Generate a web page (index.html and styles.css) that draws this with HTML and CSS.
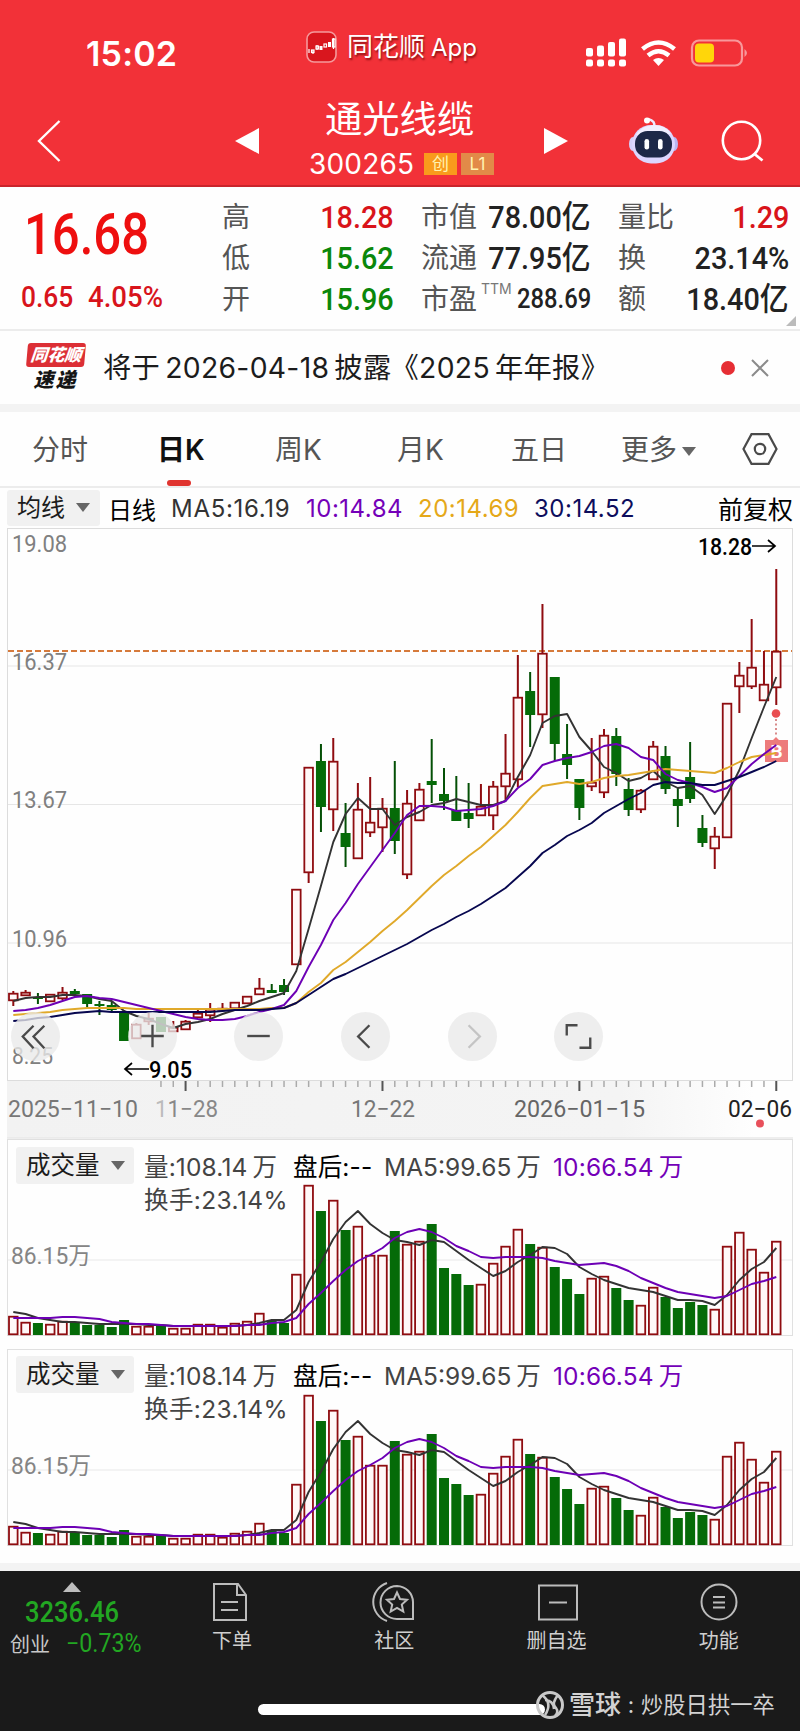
FILE: index.html
```html
<!DOCTYPE html>
<html lang="zh-CN">
<head>
<meta charset="utf-8">
<title>通光线缆 300265</title>
<link rel="stylesheet" href="styles.css">
</head>
<body>
<header class="top">
  <div class="status">
    <span class="clock">15:02</span>
    <span class="app">
      <svg width="31" height="32" viewBox="0 0 31 32"><rect x="1" y="1" width="29" height="30" rx="7" fill="#d9161e" stroke="#f59a9c" stroke-width="1.6"/><g fill="none" stroke="#fff" stroke-width="1.2"><path d="M3 18v4M7 19v4M11 14v5M27.500 7v11"/><rect x="5.500" y="19" width="2.500" height="2.500"/><rect x="10" y="15" width="2.500" height="3"/><rect x="18" y="13" width="2.500" height="3"/><rect x="26.500" y="8" width="2.500" height="8"/></g><path d="M13.500 15h3v4h-3zM22 11h3v5h-3z" fill="#fff"/></svg>
      <span class="app-name">同花顺<i>App</i></span>
    </span>
    <svg class="sys" width="164" height="32" viewBox="584 37 164 32">
      <g fill="#fff"><rect x="585" y="48" width="7" height="8.500" rx="2"/><rect x="596" y="45.500" width="7" height="11" rx="2"/><rect x="607" y="42" width="7" height="14.500" rx="2"/><rect x="618" y="38.500" width="7" height="18" rx="2"/><rect x="585" y="59.500" width="7" height="7" rx="2"/><rect x="596" y="59.500" width="7" height="7" rx="2"/><rect x="607" y="59.500" width="7" height="7" rx="2"/><rect x="618" y="59.500" width="7" height="7" rx="2"/><path d="M652 60q5.500-4 11 0l-5.500 6z"/></g>
      <g fill="none" stroke="#fff" stroke-width="4.600"><path d="M641.500 49q16-13 32 0M647 55.500q10.500-8.500 21 0"/></g>
      <rect x="691" y="40.500" width="50" height="25" rx="7" fill="none" stroke="#f8989b" stroke-width="2.200"/><rect x="694" y="43.500" width="19" height="19" rx="4" fill="#ffd60a"/><path d="M743.500 49v8q5-4 0-8z" fill="#f8989b"/>
    </svg>
  </div>
  <div class="nav">
    <svg width="26" height="44" viewBox="36 119 26 44"><path d="M59.500 121L39 141l20.500 20" fill="none" stroke="#fff" stroke-width="2.400"/></svg>
    <svg class="prev" width="24" height="26" viewBox="0 0 24 26"><path d="M24 0v26L0 13z" fill="#fff"/></svg>
    <div class="title"><h1>通光线缆</h1><div class="code"><span>300265</span><b>创</b><b class="l1">L1</b></div></div>
    <svg class="next" width="24" height="26" viewBox="0 0 24 26"><path d="M0 0v26l24-13z" fill="#fff"/></svg>
    <svg class="robot" width="50" height="48" viewBox="630 116 50 48"><path d="M655 126q2-6-6-8" fill="none" stroke="#eee9ff" stroke-width="2.500"/><circle cx="648" cy="119.500" r="3" fill="#fff"/><ellipse cx="634" cy="143" rx="4" ry="7" fill="#d4d0fa"/><ellipse cx="675" cy="143" rx="4" ry="7" fill="#b9b5f2"/><rect x="633" y="124" width="43" height="38.500" rx="19" fill="#dcd6ff"/><path d="M637 134q6-10 18-10t17 9z" fill="#fff" opacity=".6"/><rect x="636" y="130" width="37" height="26.500" rx="12.500" fill="#1d2848"/><rect x="645.500" y="138" width="4.600" height="10.500" rx="2.300" fill="#fff"/><rect x="659" y="138" width="4.600" height="10.500" rx="2.300" fill="#fff"/></svg>
    <svg width="44" height="44" viewBox="720 118 44 44"><circle cx="741.500" cy="139.500" r="18.700" fill="none" stroke="#fff" stroke-width="2.600"/><path d="M754.500 153l8 6.500" stroke="#fff" stroke-width="2.800"/></svg>
  </div>
</header>

<section class="quote">
  <div class="last"><strong class="din">16.68</strong><div class="chg"><span class="din">0.65</span><span class="din">4.05%</span></div></div>
  <div class="stats">
    <span>高</span><em class="din red">18.28</em><span>市值</span><em class="din">78.00<u>亿</u></em><span class="far">量比</span><em class="din red">1.29</em>
    <span>低</span><em class="din green">15.62</em><span>流通</span><em class="din">77.95<u>亿</u></em><span class="far">换</span><em class="din">23.14%</em>
    <span>开</span><em class="din green">15.96</em><span class="pe">市盈<sup>TTM</sup></span><em class="din small">288.69</em><span class="far">额</span><em class="din">18.40<u>亿</u></em>
  </div>
  <i class="corner"></i>
</section>

<section class="notice">
  <div class="express"><b>同花顺</b><span>速递</span></div>
  <p>将于<s></s>2026-04-18<s></s>披露<span class="lq">《</span>2025<s></s>年年报》</p>
  <i class="dot"></i>
  <svg width="18" height="18" viewBox="0 0 18 18"><path d="M1 1l16 16M17 1L1 17" stroke="#8b8b8b" stroke-width="2"/></svg>
</section>

<nav class="tabs">
  <span>分时</span><span class="on">日K</span><span>周K</span><span class="m">月K</span><span>五日</span><span>更多<i class="caret"></i></span>
  <svg width="36" height="32" viewBox="0 0 36 32"><path d="M9.500 1.200h17L34.500 16l-8 14.800h-17L1.500 16z" fill="none" stroke="#4a4a4a" stroke-width="2.200"/><circle cx="18" cy="16" r="5.200" fill="none" stroke="#4a4a4a" stroke-width="2.200"/></svg>
</nav>

<div class="ma">
  <span class="chip">均线<i class="caret"></i></span><span class="blk">日线</span><span class="m5">MA5:16.19</span><span class="purple">10:14.84</span><span class="gold">20:14.69</span><span class="navy">30:14.52</span><span class="blk adj">前复权</span>
</div>

<section class="kline">
  <svg id="k" width="800" height="611" viewBox="0 528 800 611"></svg>
  <div class="tools">
    <button class="first"><svg viewBox="0 0 50 50"><path d="M23 14L12 25l11 12M34 14L23 25l11 12"/></svg></button>
    <button><svg viewBox="0 0 50 50"><path d="M25 13v23M13.500 24.500h23"/></svg></button>
    <button><svg viewBox="0 0 50 50"><path d="M13.500 24.500h23"/></svg></button>
    <button><svg viewBox="0 0 50 50"><path d="M29 13.500L17.500 25 29 36.500"/></svg></button>
    <button class="off"><svg viewBox="0 0 50 50"><path d="M21 13.500L32.500 25 21 36.500"/></svg></button>
    <button><svg viewBox="0 0 50 50"><path d="M13 24V13.500h11M37 26v10.500H26"/></svg></button>
  </div>
</section>

<section class="vol">
  <svg class="bars" width="800" height="197" viewBox="0 1139 800 197"></svg>
  <div class="legend"><span class="chip">成交量<i class="caret"></i></span><span>量:108.14<s></s>万</span><span class="blk">盘后:--</span><span class="v5">MA5:99.65<s></s>万</span><span class="purple">10:66.54<s></s>万</span><span class="turn">换手:23.14%</span></div>
</section>
<section class="vol">
  <svg class="bars" width="800" height="197" viewBox="0 1139 800 197"></svg>
  <div class="legend"><span class="chip">成交量<i class="caret"></i></span><span>量:108.14<s></s>万</span><span class="blk">盘后:--</span><span class="v5">MA5:99.65<s></s>万</span><span class="purple">10:66.54<s></s>万</span><span class="turn">换手:23.14%</span></div>
</section>

<footer class="bottom">
  <div class="row">
    <div class="index"><i class="up"></i><b class="din">3236.46</b><div><span>创业</span><em class="din">−0.73%</em></div></div>
    <div class="item"><svg width="44" height="42" viewBox="0 0 44 42"><path d="M4 3h24l8 11v25H4zM27 3v11h9M11 21h17M11 29h17"/></svg>下单</div>
    <div class="item"><svg width="44" height="42" viewBox="0 0 44 42"><path d="M25 5a16.500 16.500 0 1 0 0 33h16V21A16.500 16.500 0 0 0 25 5zM15 2a20 20 0 0 0 0 38"/><path d="M25 11.500l3 6.500 7 .8-5.200 4.700 1.500 7L25 27l-6.300 3.500 1.500-7L15 18.800l7-.8z"/></svg>社区</div>
    <div class="item"><svg width="44" height="42" viewBox="0 0 44 42"><path d="M4 4.500h38v34H4zM14 21.500h18"/></svg>删自选</div>
    <div class="item"><svg width="44" height="42" viewBox="0 0 44 42"><circle cx="22" cy="21" r="17.500"/><path d="M16 16h12M16 21.500h12M16 26.500h12"/></svg>功能</div>
  </div>
  <div class="home"></div>
  <div class="mark"><svg width="30" height="30" viewBox="0 0 30 30"><g fill="none" stroke="#c9c9c9"><circle cx="15" cy="15" r="12.500" stroke-width="3"/><path d="M7 5q11 8 3 20M23 5q-7 9-2 13 3 4-1 8M10 10q8 0 9 9" stroke-width="2.500"/></g></svg><b>雪球</b><i>:</i><span>炒股日拱一卒</span></div>
</footer>
<script src="chart.js"></script>
</body>
</html>
```

FILE: styles.css
```css
* { box-sizing: border-box; }
body { margin: 0; width: 800px; background: #fefefe; color: #222; font-family: Inter, "Noto Sans CJK SC", sans-serif; }
i, em { font-style: normal; }
u, s { text-decoration: none; }
s { display: inline-block; width: 5px; }
.din { font-family: Roboto, "Noto Sans CJK SC", sans-serif; font-weight: 500; display: inline-block; white-space: nowrap; transform: scaleX(.87); transform-origin: 0 50%; }
.purple { color: #7400b8 !important; }
.gold { color: #e5a818 !important; }
.navy { color: #0d0d5c !important; }
.blk { color: #000 !important; }

/* header */
.top { height: 187px; background: #f23138; border-bottom: 2px solid #c9242c; color: #fff; }
.status { height: 96px; padding: 10px 51px 0 86px; display: flex; align-items: center; }
.clock { font-size: 34px; font-weight: 600; width: 220px; letter-spacing: .2px; margin-top: 0; }
.app { display: flex; align-items: center; gap: 10px; width: 279px; margin-top: -12px; }
.app-name { font-size: 26px; line-height: 32px; text-shadow: 1px 2px 2px rgba(90,0,0,.65); }
.app-name i { font-size: 24px; margin-left: 6px; }
.sys { margin-top: -1px; flex: none; }
.nav { height: 89px; display: flex; align-items: center; padding: 0 36px; }
.nav > svg { flex: none; margin-top: 1px; }
.prev { margin-left: 173px !important; }
.title { width: 287px; }
.title h1 { margin: -10px 0 0; padding-left: 66px; font-size: 37.300px; line-height: 46px; font-weight: 400; }
.code { display: flex; align-items: center; padding-left: 50px; height: 28px; margin: 7px 0 -4px; font-size: 28px; }
.code span { width: 115px; letter-spacing: .2px; }
.code b { width: 33px; height: 22px; line-height: 22px; font-size: 17px; font-weight: 400; text-align: center; background: #f99b1c; color: #fff3b0; }
.code .l1 { margin-left: 4px; background: #e28a48; }
.robot { margin-left: 61px; }
.robot + svg { margin-left: 41px; }

/* quote */
.quote { height: 144px; border-bottom: 2px solid #ececec; display: flex; position: relative; }
.last { width: 222px; color: #ee0f0f; }
.last strong { display: block; font-size: 57px; line-height: 60px; margin: 18px 0 0 24px; transform: scaleX(.86); }
.chg { display: flex; font-size: 29px; line-height: 34px; color: #d8141c; margin: 15px 0 0 21px; }
.chg span { transform: scaleX(.91); }
.chg span:first-child { width: 67px; }
.chg span:last-child { transform: scaleX(.95); }
.stats { display: grid; grid-template-columns: 90px 82px 79px 118px 60px 138px; grid-auto-rows: 41px; padding-top: 10px; align-items: center; }
.stats span { font-size: 28px; line-height: 41px; color: #555; white-space: nowrap; }
.stats span:nth-of-type(3n+2) { margin-left: 27px; }
.stats .far { margin-left: 27px; }
.stats em { font-size: 32px; line-height: 41px; justify-self: end; transform: scaleX(.9); transform-origin: 100% 50%; color: #222; }
.stats u { font-size: 32px; }
.stats .small { font-size: 27px; transform: scaleX(.88); }
.stats .red { color: #d9141a; }
.stats .green { color: #0a870a; }
.pe sup { font-size: 14px; vertical-align: 15px; line-height: 0; margin-left: 4px; color: #777; }
.corner { position: absolute; right: 4px; bottom: 3px; border: 5px solid transparent; border-right-color: #bbb; border-bottom-color: #bbb; }

/* notice */
.notice { height: 81px; border-bottom: 8px solid #f3f3f3; display: flex; align-items: center; padding-left: 25px; }
.express { width: 78px; text-align: center; font-style: italic; padding-right: 17px; }
.express b { display: block; background: #dc2f35; color: #fff; font-size: 17px; line-height: 24px; border-radius: 3px; margin: 0 1px 0 2px; transform: skewX(-5deg); font-weight: 900; }
.express span { display: block; font-size: 20px; line-height: 26px; font-weight: 900; color: #151515; letter-spacing: 2px; }
.notice p { margin: 0; width: 618px; font-size: 28.300px; line-height: 40px; white-space: nowrap; color: #1c1c1c; letter-spacing: .3px; }
.lq { margin-left: -1px; }
.dot { width: 14px; height: 14px; border-radius: 50%; background: #e62e34; margin: 0 16px 0 0; }

/* tabs */
.tabs { height: 76px; border-bottom: 2px solid #ececec; display: grid; grid-template-columns: 127px 116px 123px 113px 110px 121px 36px; padding-left: 32px; align-items: center; font-size: 28px; color: #555; }
.tabs span { line-height: 76px; height: 74px; position: relative; white-space: nowrap; }
.tabs .on { color: #111; font-weight: 600; margin-left: -2px; }
.tabs .m { margin-left: -1px; }
.tabs .on::after { content: ""; position: absolute; left: 10px; bottom: 0; width: 24px; height: 6px; border-radius: 3px; background: #e0342f; }
.tabs svg { margin-top: -1px; }
.caret { display: inline-block; border: 7px solid transparent; border-top: 9px solid #666; border-bottom: 0; vertical-align: 4px; margin-left: 5px; }

/* moving-average legend */
.ma { height: 40px; display: grid; grid-template-columns: 101px 63px 135px 112px 116px 184px 80px; padding-left: 7px; align-items: center; font-size: 24px; color: #333; white-space: nowrap; }
.ma .purple, .ma .gold, .ma .navy { letter-spacing: .5px; }
.ma .m5 { letter-spacing: .7px; }
.chip { background: #f1f1f1; color: #1c1c1c; height: 36px; line-height: 36px; padding-left: 10px; border-radius: 3px; }
.ma .chip { width: 93px; }
.chip .caret { margin-left: 11px; }
.adj { font-size: 25px; }

/* charts */
.kline { height: 611px; position: relative; }
.kline > svg, .bars { display: block; }
.tools { position: absolute; left: 10.500px; top: 484px; display: flex; gap: 57.700px; }
.tools .first { margin-right: 10.500px; }
.tools button { width: 49px; height: 49px; border: 0; padding: 0; border-radius: 50%; background: rgba(233,233,233,.78); }
.tools svg { display: block; width: 49px; height: 49px; fill: none; stroke: #4a4a4a; stroke-width: 2.400; }
.tools .off svg { stroke: #c4c4c4; }
text { font-family: Roboto, "Noto Sans CJK SC", sans-serif; }
.vol { height: 197px; position: relative; margin-bottom: 12.500px; }
.legend { position: absolute; left: 16px; top: 8px; display: grid; grid-template-columns: 128px 149px 91px 169px 150px; grid-template-rows: 36px 30px; align-items: center; font-size: 24.500px; color: #444; white-space: nowrap; letter-spacing: .15px; }
.legend .chip { width: 118px; height: 37px; letter-spacing: 0; }
.legend .v5 { letter-spacing: 0; }
.turn { grid-column: 2; letter-spacing: .4px; }

/* bottom bar */
.bottom { height: 168px; border-top: 8px solid #f3f3f3; background: #1a1a1a; margin-top: 17px; position: relative; color: #cfcfcf; }
.row { display: flex; }
.index { width: 151px; color: #22a722; padding-top: 11px; }
.up { display: block; border: 9px solid transparent; border-bottom: 10px solid #bdbdbd; border-top: 0; width: 0; margin-left: 63px; }
.index b { display: block; font-size: 29px; line-height: 34px; margin: 3px 0 0 25px; transform: scaleX(.88); }
.index div { display: flex; align-items: center; padding-left: 10px; height: 30px; }
.index span { font-size: 20px; color: #c8c8c8; width: 56px; }
.index em { font-size: 25px; font-weight: 400; transform: scaleX(.93); }
.item { width: 162.500px; display: flex; flex-direction: column; align-items: center; font-size: 20px; line-height: 30px; padding-top: 10px; gap: 3px; }
.item svg { fill: none; stroke: #bcbcbc; stroke-width: 2; }
.home { position: absolute; left: 258px; top: 133px; width: 287px; height: 11px; border-radius: 6px; background: #fff; }
.mark { position: absolute; left: 535px; top: 115px; display: flex; align-items: center; font-size: 22.300px; line-height: 38px; color: #d2d2d2; white-space: nowrap; }
.mark b { font-size: 26px; font-weight: 500; margin-left: 4px; }
.mark i { width: 20px; text-align: center; }
```

FILE: chart.js
```js
const X0 = 13.3, STEP = 12.306;
const px = i => X0 + STEP * i;
const RED = '#8f0c10', GREEN = '#056b08';

// Each candle: [direction, high, body top, body bottom, low]
const candles = [
['r',991,993,1001,1006],['r',990,992,996,996],['g',993,997,999,1004],['r',994,994,1002,1002],['r',987,992,999,1000],['g',989,991,994,997],['g',994,994,1004,1007],['g',1001,1004,1006,1015],['g',1001,1005,1010,1013],['g',1013,1013,1041,1041],
['r',1023,1024,1039,1039],['r',1013,1018,1022,1025],['g',1017,1017,1032,1032],['r',1021,1027,1032,1032],['r',1020,1021,1030,1030],['r',1010,1013,1018,1018],['r',1003,1009,1016,1022],['r',1003,1008,1010,1010],['r',1002,1002,1009,1009],['r',996,996,1004,1004],
['r',978,988,995,995],['g',984,990,993,993],['g',979,985,992,995],['r',889,889,965,965],['r',767,767,873,883],['g',744,761,807,832],['r',738,761,810,831],['g',803,833,847,867],['r',783,809,859,859],['r',777,822,833,837],
['r',798,808,828,852],['g',761,808,841,854],['r',790,803,875,879],['r',783,789,821,821],['g',739,781,785,803],['g',768,794,801,810],['g',776,810,821,821],['g',783,813,819,828],['r',784,806,816,816],['r',781,786,816,830],
['r',734,773,787,801],['r',655,697,780,787],['g',672,691,715,747],['r',604,653,715,728],['g',677,677,744,761],['g',724,754,765,779],['g',779,779,808,820],['r',738,782,787,791],['r',729,735,793,798],['g',728,736,774,786],
['g',778,789,810,816],['r',789,790,810,813],['r',741,746,780,780],['g',746,756,789,794],['g',787,799,806,827],['g',742,777,799,803],['g',815,828,843,847],['r',827,836,849,869],['r',703,703,838,838],['r',662,675,687,713],
['r',619,667,687,689],['r',651,684,701,701],['r',569,651,688,705]];

const averages = [
['#333', [1001,998,997,997,995,995,996,999,1001,1011,1016,1019,1024,1028,1024,1022,1019,1014,1010,1006,1001,997,993,971,929,886,842,814,798,809,809,825,817,812,805,803,799,802,805,805,801,777,755,723,716,714,737,751,767,773,781,778,771,782,788,786,795,814,795,770,738,707,677]],
['#e0a92a', [1015,1014,1013,1012,1010,1009,1008,1008,1008,1008,1009,1009,1009,1009,1009,1009,1009,1009,1009,1009,1009,1008,1008,1003,992,983,970,962,952,942,931,921,910,898,886,875,866,856,847,836,825,812,798,786,784,782,784,782,778,776,775,773,771,769,770,771,772,773,768,762,757,755,753]],
['#6d00b5', [1011,1010,1008,1005,1001,997,996,998,999,1002,1005,1008,1011,1014,1017,1019,1020,1020,1019,1016,1012,1009,1005,991,967,945,920,903,884,867,850,833,815,806,806,807,811,810,809,806,801,788,779,765,761,758,756,752,746,744,748,757,760,774,780,783,787,792,788,776,764,754,745]],
['#07074f', [1021,1020,1018,1017,1015,1013,1012,1011,1012,1012,1012,1012,1012,1012,1012,1012,1012,1011,1010,1010,1010,1009,1008,1003,995,987,979,974,968,962,956,950,944,937,930,924,917,911,904,896,888,877,866,853,845,836,830,823,813,806,799,793,785,782,783,783,785,785,781,777,772,767,761]]];

const volTops = [1316,1322,1323,1324,1321,1323,1325,1325,1327,1320,1326,1326,1325,1328,1328,1324,1324,1327,1323,1321,1313,1321,1323,1274,1185,1211,1200,1230,1226,1255,1255,1231,1244,1241,1224,1268,1274,1285,1284,1263,1246,1229,1244,1247,1267,1279,1294,1278,1276,1288,1300,1305,1287,1297,1308,1302,1305,1309,1246,1232,1249,1272,1241];
const volAverages = [
['#333', [1312,1314,1318,1320,1322,1322,1323,1324,1324,1324,1324,1325,1325,1326,1326,1326,1326,1326,1326,1325,1323,1320,1320,1310,1282,1262,1239,1222,1211,1224,1233,1240,1242,1245,1240,1242,1251,1260,1268,1276,1271,1262,1255,1247,1248,1254,1267,1274,1280,1284,1288,1290,1292,1296,1300,1300,1301,1305,1295,1280,1269,1262,1248]],
['#6d00b5', [1318,1318,1318,1318,1317,1317,1318,1319,1322,1323,1324,1324,1325,1326,1326,1326,1326,1326,1326,1325,1325,1323,1322,1318,1304,1293,1281,1270,1261,1255,1248,1238,1232,1229,1232,1238,1246,1251,1257,1258,1257,1257,1257,1258,1261,1263,1265,1264,1263,1266,1271,1278,1283,1288,1292,1294,1296,1298,1296,1290,1284,1281,1277]]];

const line = (x1, y1, x2, y2, c, w, extra = '') => `<path d="M${x1} ${y1}L${x2} ${y2}" stroke="${c}" stroke-width="${w}" ${extra}/>`;
const poly = ([c, ys]) => `<polyline fill="none" stroke="${c}" stroke-width="1.9" stroke-linejoin="round" points="${ys.map((y, i) => px(i).toFixed(1) + ',' + y).join(' ')}"/>`;
const label = (x, y, w, s, c, size = 23, weight = 400) => `<text x="${x}" y="${y}" textLength="${w}" lengthAdjust="spacingAndGlyphs" font-size="${size}" font-weight="${weight}" fill="${c}">${s}</text>`;
const body = (i, d, t, b) => {
  const x = px(i);
  if (d === 'g') return `<rect x="${x - 5}" y="${t}" width="10" height="${b - t}" fill="${GREEN}"/>`;
  return `<rect x="${x - 4.3}" y="${t + .7}" width="8.600" height="${Math.max(1, b - t - 1.4)}" fill="#fff8f8" stroke="${RED}" stroke-width="1.800"/>`;
};

let k = '<defs><linearGradient id="fade"><stop offset="0" stop-color="#f2f2f2"/><stop offset=".78" stop-color="#f4f4f4"/><stop offset=".95" stop-color="#fefefe"/></linearGradient></defs>';
k += '<rect x="7" y="1081" width="786" height="57" fill="url(#fade)"/><rect x="7.500" y="528.500" width="785" height="552" fill="#fefefe" stroke="#dcdcdc"/>';
for (const y of [666, 804.5, 943]) k += line(8, y, 792, y, '#e6e6e6', 1.2);
k += line(8, 651, 792, 651, '#d67a3b', 1.8, 'stroke-dasharray="6 3"');
k += label(12, 552, 55, '19.08', '#808080') + label(12, 670, 55, '16.37', '#808080') + label(12, 808, 55, '13.67', '#808080') + label(12, 946.5, 55, '10.96', '#808080') + label(12, 1064, 41, '8.25', '#808080');
candles.forEach(([d, h, t, b, l], i) => {
  k += line(px(i), h, px(i), l, d === 'g' ? '#045006' : RED, 2) + body(i, d, t, b);
});
k += '<circle cx="776" cy="713.500" r="4.300" fill="#e94d50"/><path d="M776 719v18" stroke="#c66" stroke-width="1.500" stroke-dasharray="2 2.500"/><path d="M765 740h8l3-3 3 3h9v22h-23z" fill="#ed7b7b"/><text x="776.500" y="758" font-size="19" font-weight="700" text-anchor="middle" fill="#fff">B</text>';
k += averages.map(poly).join('');
k += label(698, 555, 54, '18.28', '#000', 24, 500) + '<path d="M752 546h23M768 540l7 6-7 6" fill="none" stroke="#000" stroke-width="1.700"/>';
k += label(149, 1077.500, 43, '9.05', '#000', 24, 500) + '<path d="M149 1069h-23M132 1063l-7 6 7 6" fill="none" stroke="#000" stroke-width="1.700"/>';
for (let i = 12; i <= 62; i++) {
  const major = (i - 14) % 16 === 0;
  k += line(px(i), 1081, px(i), major ? 1091 : 1087, major ? '#555' : '#aaa', major ? 2 : 1.5);
}
k += label(8, 1117, 130, '2025−11−10', '#777') + label(155, 1117, 63, '<tspan fill="#bbb">1</tspan>1−28', '#888') + label(351, 1117, 64, '12−22', '#777') + label(514, 1117, 131, '2026−01−15', '#666') + label(728, 1117, 64, '02−06', '#222');
k += '<circle cx="760" cy="1123.500" r="4" fill="#e8505b"/>' + line(7, 1138, 793, 1138, '#e8e8e8', 1.5);
document.getElementById('k').innerHTML = k;

let v = '<rect x="7.500" y="1139.500" width="785" height="196" fill="#fefefe" stroke="#e0e0e0"/>' + line(8, 1260, 792, 1260, '#e8e8e8', 1.2);
v += label(11, 1263.5, 80, '86.15万', '#858585', 24);
volTops.forEach((t, i) => { v += body(i, candles[i][0], t, 1335); });
v += volAverages.map(poly).join('');
document.querySelectorAll('.bars').forEach(s => { s.innerHTML = v; });
```
